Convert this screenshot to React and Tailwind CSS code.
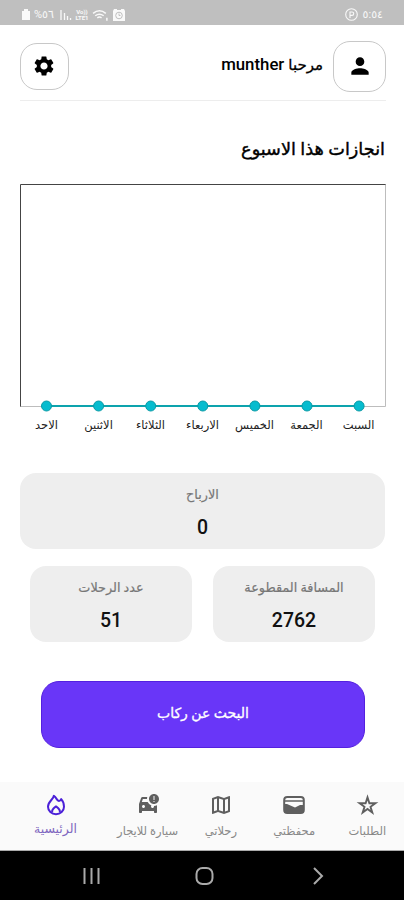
import { MdSettings, MdPerson, MdOutlineMap, MdCarCrash } from "react-icons/md";

const days = [
  "الاحد",
  "الاثنين",
  "الثلاثاء",
  "الاربعاء",
  "الخميس",
  "الجمعة",
  "السبت",
];

function FlameIcon() {
  return (
    <svg width="24" height="24" viewBox="0 0 24 24" fill="none" stroke="currentColor" strokeWidth="2" strokeLinejoin="round">
      <path d="M9.800 2.800C9.500 6.400 4 8.300 4 13.700a8 7.500 0 0 0 16 0c0-3-.8-5.400-2.800-7.600-.8 1.500-1.800 2-2.800 1.700-1.600-.5-2-3.200-4.600-5z" />
      <path d="M8.300 19.200c-1-2.700 1.700-4.400 3.700-5.800 2 1.400 4.700 3.100 3.700 5.800" />
    </svg>
  );
}

function WalletIcon() {
  return (
    <svg width="24" height="24" viewBox="0 0 24 24">
      <rect x="2.200" y="4" width="19.600" height="16" rx="3" fill="none" stroke="currentColor" strokeWidth="2" />
      <path d="M3 8h18" stroke="currentColor" strokeWidth="1.500" />
      <path d="M2 11h3l8 3.500 5-2.500h4v5.500a2.500 2.500 0 0 1-2.500 2.500h-15A2.500 2.500 0 0 1 2 17.500z" fill="currentColor" />
    </svg>
  );
}

function StarIcon() {
  return (
    <svg width="24" height="24" viewBox="0 0 24 24" fill="none" stroke="currentColor" strokeWidth="1.900">
      <path d="M12.500 4.400l1.900 5.900h6l-4.900 3.500 1.800 5.800-4.800-3.600-4.800 3.600 1.800-5.800-4.900-3.500h6z" />
    </svg>
  );
}

const tabs = [
  { label: "الرئيسية", icon: FlameIcon, active: true },
  { label: "سيارة للايجار", icon: MdCarCrash },
  { label: "رحلاتي", icon: MdOutlineMap },
  { label: "محفظتي", icon: WalletIcon },
  { label: "الطلبات", icon: StarIcon },
];

function StatusBar() {
  return (
    <div className="flex h-[25px] items-center justify-between bg-[#bfbfbf] pt-1 pr-[21px] pl-[22px] text-white/90">
      <div className="flex items-center">
        <svg width="8" height="11" viewBox="0 0 8 11" fill="currentColor">
          <path d="M2 0h4v2h2v9H0V2h2z" />
        </svg>
        <span className="ml-1 w-[22px] text-[11px] leading-none">%٥٦</span>
        <svg className="ml-[4px]" width="12" height="10" viewBox="0 0 12 10" fill="none" stroke="currentColor" strokeWidth="1.3">
          <path d="M1 0v10M4.500 3v7M7.500 6v4M10.500 8v2" />
        </svg>
        <div className="ml-[2px] w-4 text-center text-[6px] leading-[6px] font-bold">
          <div>Vo))</div>
          <div>LTE1</div>
        </div>
        <svg className="ml-[2px]" width="17" height="12" viewBox="0 0 16 11" fill="none" stroke="currentColor" strokeWidth="1.400">
          <path d="M1 4q6-5 12 0M3 6.200q4-3 8 0M5 8.200q2-1.500 4 0M14 8v3" />
        </svg>
        <svg className="ml-[4px]" width="12" height="12" viewBox="0 0 12 12">
          <path d="M1 0h3v1h4V0h3l1 2v10H0V2z" fill="currentColor" />
          <circle cx="6" cy="6.500" r="3.300" fill="none" stroke="#bfbfbf" />
          <path d="M6 4.500v2h1.500" fill="none" stroke="#bfbfbf" />
        </svg>
      </div>
      <div className="flex items-center gap-[5px]">
        <svg width="13" height="13" viewBox="0 0 13 13" fill="none" stroke="currentColor" strokeWidth="1.1">
          <circle cx="6.5" cy="6.5" r="5.8" />
          <path d="M5 10V4h2a1.7 1.7 0 0 1 0 3.4H5" />
        </svg>
        <span className="text-[11px] leading-none">٥:٥٤</span>
      </div>
    </div>
  );
}

function Header() {
  return (
    <header className="mr-[18px] ml-5 flex h-[76px] items-center justify-between border-b border-[#ededed] pt-[7px]">
      <button className="flex h-[47px] w-[49px] items-center justify-center rounded-[17px] border border-[#c8c8c8] pr-[2px]">
        <MdSettings size={24} />
      </button>
      <div className="flex items-center gap-[10px]">
        <p dir="ltr" className="flex items-baseline gap-1 pb-[3px] text-[16.800px] font-medium">
          <bdi>munther</bdi>
          <bdi className="text-[15px] [-webkit-text-stroke:0.3px]">مرحبا</bdi>
        </p>
        <button className="flex h-[51px] w-[53px] items-center justify-center rounded-[17px] border border-[#c8c8c8]">
          <MdPerson size={26} />
        </button>
      </div>
    </header>
  );
}

function WeekChart() {
  return (
    <div className="mt-[20px]">
      <svg className="block" width="404" height="230" viewBox="0 0 404 230">
        <path d="M385.5 1v222.5H20" fill="none" stroke="#bdbdbd" />
        <path d="M385.5 1.5h-365v222" fill="none" stroke="#444" />
        <path d="M46 223h313" stroke="#0da3ad" strokeWidth="2" />
        {days.map((day, i) => (
          <circle key={day} cx={46.5 + i * 52.1} cy="223" r="5" fill="#06bccf" stroke="#0a9ba6" />
        ))}
      </svg>
      <div className="mt-[4px] flex px-5">
        {days.map((day) => (
          <span key={day} className="flex-1 pl-[1px] text-center text-[11.500px] leading-4 whitespace-nowrap text-[#222]">
            {day}
          </span>
        ))}
      </div>
    </div>
  );
}

function StatCard({ title, value }) {
  return (
    <div className="flex h-[76px] flex-1 flex-col items-center rounded-2xl bg-[#eee] pt-[12px]">
      <span className="text-[12.800px] leading-5 text-[#777] [-webkit-text-stroke:0.2px]">{title}</span>
      <span className="mt-[11px] text-[19.500px] leading-6 font-medium text-[#111]">{value}</span>
    </div>
  );
}

function TabBar() {
  return (
    <nav className="flex h-[69px] border-b border-[#aaa] bg-[#fafafa] pt-[11px]">
      {tabs.map(({ label, icon: Icon, active }) => (
        <div
          key={label}
          className={`flex flex-col items-center whitespace-nowrap ${active ? "w-[111px] text-[#4b20d8]" : "flex-1 text-[#5f5f5f]"}`}
        >
          <Icon size={24} />
          <span className={`leading-4 ${active ? "mt-1 text-[12.500px] text-[#8067c0]" : "mt-[6px] text-[11.500px] text-[#888]"}`}>
            {label}
          </span>
        </div>
      ))}
    </nav>
  );
}

function SystemBar() {
  return (
    <svg className="block bg-black" width="404" height="49" viewBox="0 0 404 49" fill="none" stroke="#aaa" strokeWidth="2">
      <path d="M84.500 17v16M91.500 17v16M98.500 17v16" />
      <rect x="196.500" y="17" width="16" height="16" rx="6" />
      <path d="M314 17l8 8-8 8" />
    </svg>
  );
}

export default function App() {
  return (
    <div className="flex h-[900px] w-[404px] flex-col bg-white font-['Roboto','Noto_Sans','DejaVu_Sans',sans-serif] text-black">
      <StatusBar />
      <Header />
      <h2 dir="rtl" className="mt-[34px] pr-[19px] text-[17.700px] leading-7 font-medium [-webkit-text-stroke:0.4px]">
        انجازات هذا الاسبوع
      </h2>
      <WeekChart />
      <section className="mt-10 mr-[19px] ml-5 flex">
        <StatCard title="الارباح" value="0" />
      </section>
      <section className="mt-[17px] mr-[29px] ml-[30px] flex gap-[21px]">
        <StatCard title="عدد الرحلات" value="51" />
        <StatCard title="المسافة المقطوعة" value="2762" />
      </section>
      <button className="mr-[39px] ml-[41px] mt-[39px] h-[67px] rounded-[18px] border border-[#5420df] bg-[#6936f8] pb-[2px] text-[14px] font-medium text-white [-webkit-text-stroke:0.3px]">
        البحث عن ركاب
      </button>
      <div className="mt-auto">
        <TabBar />
        <SystemBar />
      </div>
    </div>
  );
}
